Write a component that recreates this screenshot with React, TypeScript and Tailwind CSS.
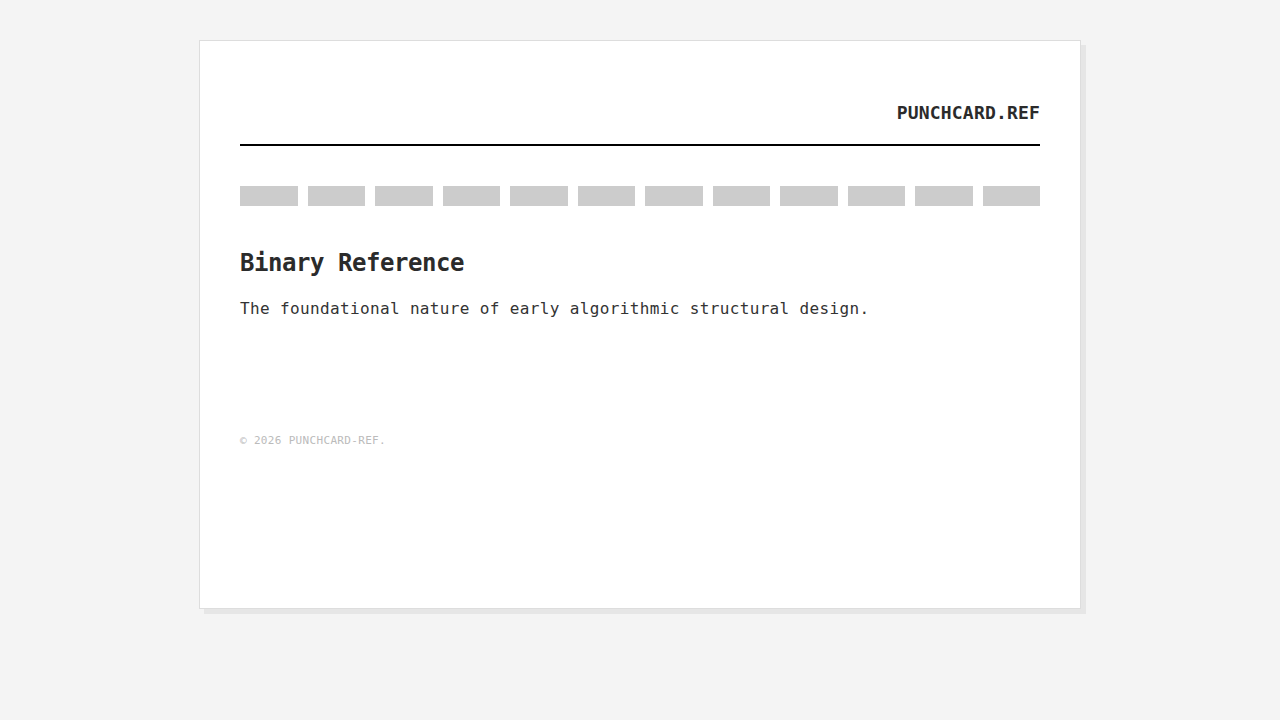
const holes = Array.from({ length: 12 }, (_, i) => i);

const App = () => {
  return (
    <div className="min-h-screen bg-[#f4f4f4] pt-10 font-['DejaVu_Sans_Mono',monospace] text-[#333]">
      {/* Card */}
      <div className="mx-auto box-border h-[569px] w-[882px] border border-[#dddddd] bg-white p-10 shadow-[5px_5px_0_#e6e6e6]">
        {/* Header */}
        <header className="flex justify-end border-b-2 border-black pb-[18px] pt-[18px]">
          <span className="text-[18px] font-bold leading-[27px] tracking-[0.01em] text-[#2b2b2b]">
            PUNCHCARD.REF
          </span>
        </header>

        {/* Punched holes */}
        <div className="mt-10 flex gap-[10px]">
          {holes.map((h) => (
            <div key={h} className="h-5 flex-1 bg-[#cccccc]" />
          ))}
        </div>

        <h1 className="mb-4 mt-[39px] text-2xl font-bold leading-9 tracking-[-0.45px] text-[#2b2b2b]">
          Binary Reference
        </h1>
        <p className="text-base leading-6 tracking-[0.36px] text-[#333]">
          The foundational nature of early algorithmic structural design.
        </p>

        <footer className="mt-[111px] text-[11px] leading-[17px] tracking-[0.03em] text-[#bbbbbb]">
          © 2026 PUNCHCARD-REF.
        </footer>
      </div>
    </div>
  );
};

export default App;
